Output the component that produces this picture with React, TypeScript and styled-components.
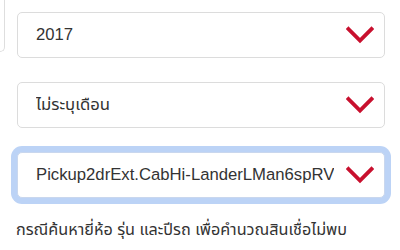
import styled, { createGlobalStyle } from "styled-components";

const GlobalStyle = createGlobalStyle`
  html, body {
    margin: 0;
    padding: 0;
    background: #ffffff;
  }
  body {
    font-family: "Liberation Sans", "Noto Sans Thai", "Noto Sans", sans-serif;
    color: #333333;
  }
`;

const Page = styled.div`
  display: flex;
  width: 400px;
  height: 250px;
  overflow: hidden;
`;

const Stub = styled.div`
  flex: 0 0 5px;
  height: 52px;
  border-right: 1px solid #dedede;
  border-bottom: 1px solid #dedede;
  border-bottom-right-radius: 5px;
  box-sizing: border-box;
`;

const Form = styled.div`
  flex: 1;
  display: flex;
  flex-direction: column;
  gap: 24px;
  padding: 12px 17px 0 12px;
`;

const Select = styled.div<{ $focused?: boolean }>`
  display: flex;
  align-items: center;
  gap: 12px;
  height: 46px;
  box-sizing: border-box;
  padding: 0 10px 0 18px;
  border: 1px solid ${({ $focused }) => ($focused ? "#c9d7ee" : "#dcdcdc")};
  border-radius: 5px;
  background: #ffffff;
  box-shadow: ${({ $focused }) =>
    $focused ? "0 0 0 6px #bcd3f6" : "none"};
`;

const Value = styled.span`
  flex: 1;
  overflow: hidden;
  white-space: nowrap;
  font-size: 16.7px;
  color: #333333;
`;

const Note = styled.p`
  margin: -4px 0 0 -1px;
  font-size: 16.2px;
  color: #333333;
  white-space: nowrap;
`;

const Chevron = () => (
  <svg width="28" height="18" viewBox="0 0 28 18">
    <path
      d="M2.5 3 L14 14.5 L25.5 3"
      fill="none"
      stroke="#c8102e"
      strokeWidth="3.8"
      strokeLinecap="square"
    />
  </svg>
);

const fields = [
  { value: "2017" },
  { value: "ไม่ระบุเดือน" },
  { value: "Pickup2drExt.CabHi-LanderLMan6spRV", focused: true },
];

export default function App() {
  return (
    <>
      <GlobalStyle />
      <Page>
        <Stub />
        <Form>
          {fields.map((f) => (
            <Select key={f.value} $focused={f.focused}>
              <Value>{f.value}</Value>
              <Chevron />
            </Select>
          ))}
          <Note>กรณีค้นหายี่ห้อ รุ่น และปีรถ เพื่อคำนวณสินเชื่อไม่พบ</Note>
        </Form>
      </Page>
    </>
  );
}
